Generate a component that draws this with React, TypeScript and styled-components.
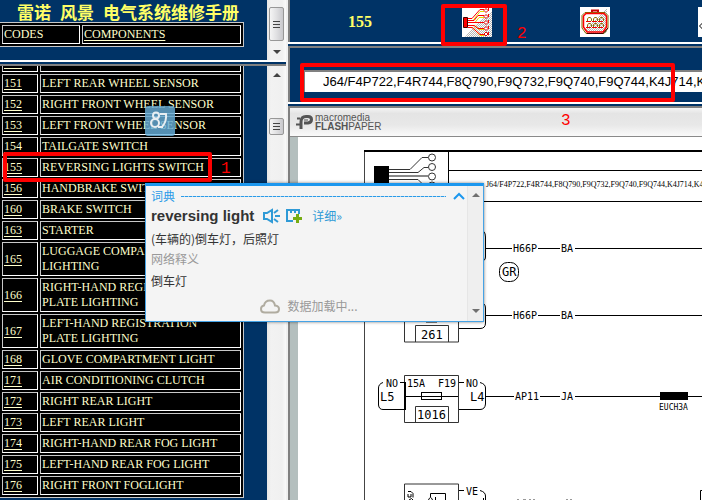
import React from "react";
import styled, { createGlobalStyle } from "styled-components";

const CJK = '"Noto Sans CJK SC", sans-serif';

const GlobalStyle = createGlobalStyle`
  * { box-sizing: border-box; }
  html, body { margin: 0; padding: 0; }
  body { background: #003366; font-family: "Liberation Sans", ${CJK}; }
  h1, h2, p { margin: 0; }
`;

const Page = styled.div`
  position: relative;
  display: grid;
  grid-template-columns: 286px minmax(0, 1fr);
  height: 100vh;
  overflow: hidden;
`;

const Column = styled.div`
  display: flex;
  flex-direction: column;
  min-width: 0;
  min-height: 0;
`;

const RightColumn = styled(Column)`
  border-left: 2px solid #f0f0f0;
`;

const Frame = styled.section<{ $height?: number }>`
  display: flex;
  flex: ${(p) => (p.$height ? `0 0 ${p.$height}px` : "1 1 0")};
  min-height: 0;
  overflow: hidden;
`;

const Divider = styled.div`
  flex: 0 0 6px;
  border-top: 2px solid #fff;
  border-bottom: 2px solid #808080;
  background: #003366;
`;

const FrameBody = styled.div`
  flex: 1;
  min-width: 0;
  overflow: hidden;
`;

const Title = styled.h1`
  display: flex;
  gap: 9px;
  padding: 1px 0 0 17px;
  font: bold 17px/21px ${CJK};
  color: #ffff66;
  white-space: nowrap;
`;

const CodeTable = styled.table<{ $scrolled?: boolean }>`
  width: 245px;
  margin: ${(p) => (p.$scrolled ? "-16px" : "0")} 0 0 -1px;
  border: 1px solid #c8c8c8;
  border-collapse: separate;
  border-spacing: 2px;
  table-layout: fixed;
  background: #000;
  color: #ffffcc;
  font: 12px/15px "Liberation Serif", serif;
`;

const Cell = styled.td<{ $width?: number }>`
  width: ${(p) => (p.$width ? `${p.$width}px` : "auto")};
  padding: 1px;
  border: 1px solid;
  border-color: #c8c8c8 #fff #fff #c8c8c8;
  vertical-align: middle;
  text-align: left;
  font-weight: normal;
`;

const NameCell = styled(Cell)`
  padding-right: 8px;
`;

const CodeLink = styled.a`
  color: inherit;
  text-decoration: underline;
  text-underline-offset: 2px;
`;

const ScrollTrack = styled.div`
  display: flex;
  flex: 0 0 19px;
  flex-direction: column;
  align-items: center;
  background: linear-gradient(90deg, #e6e6e6, #f2f2f2 4px, #f0f0f0 15px, #fafafa);
`;

const ScrollThumb = styled.div<{ $top: number; $height: number }>`
  display: flex;
  flex-direction: column;
  align-items: center;
  justify-content: center;
  gap: 2px;
  width: 15px;
  height: ${(p) => p.$height}px;
  margin-top: ${(p) => p.$top}px;
  border: 1px solid #979797;
  border-radius: 2px;
  background: linear-gradient(90deg, #f5f5f5, #e0e0e2 50%, #c8c8cc);
`;

const Grip = styled.span`
  width: 7px;
  height: 1px;
  background: #444;
`;

const Arrow = styled.div<{ $up?: boolean; $top: number }>`
  width: 0;
  height: 0;
  margin-top: ${(p) => p.$top}px;
  border: 4px solid transparent;
  border-top: ${(p) => (p.$up ? "0" : "4px solid #444")};
  border-bottom: ${(p) => (p.$up ? "4px solid #444" : "0")};
`;

const InsetFrame = styled(Frame)`
  border-left: 2px solid #808080;
`;

const Toolbar = styled.nav`
  display: flex;
  flex: 1;
  align-items: flex-start;
  padding: 7px 0 0 58px;
`;

const CodeNumber = styled.h2`
  width: 114px;
  padding-top: 5px;
  font: bold 16px/20px "Liberation Serif", serif;
  color: #ffff66;
`;

const IconButton = styled.button`
  flex: 0 0 30px;
  height: 30px;
  margin-right: 88px;
  padding: 0;
  border: 0;
  background: #fff;
  svg { display: block; }
`;

const EngineBar = styled.div`
  flex: 1;
  min-width: 0;
  padding: 22px 0 0 14px;
`;

const EngineInput = styled.input`
  display: block;
  width: 100%;
  height: 22px;
  padding: 0 0 2px 18px;
  border: solid #808080;
  border-width: 2px 0 0 1px;
  border-radius: 0;
  background: #fff;
  color: #000;
  font: 13px/18px "Liberation Sans", Arial, sans-serif;
  outline: 0;
`;

const Viewer = styled(InsetFrame)`
  flex-direction: column;
  background: #fff;
`;

const ViewerBar = styled.header`
  display: flex;
  flex: 0 0 29px;
  align-items: center;
  gap: 1px;
  padding-left: 6px;
  border-bottom: 1px solid #8a8a8a;
  background: linear-gradient(#f4f4f4, #e4e4e4 20%, #e8e8e8 60%, #fafafa);
`;

const Brand = styled.div`
  color: #555;
`;

const BrandName = styled.div`
  font: 10px/9px "Liberation Sans", sans-serif;
`;

const Sheet = styled.div`
  flex: 1;
  min-height: 0;
  overflow: hidden;
  border-left: 8px solid #b4bfbe;
  background: #fff;
  svg { display: block; }
`;

const Mark = styled.div<{ $x: number; $y: number; $w: number; $h: number }>`
  position: absolute;
  left: ${(p) => p.$x}px;
  top: ${(p) => p.$y}px;
  width: ${(p) => p.$w}px;
  height: ${(p) => p.$h}px;
  border: 4px solid #ff0000;
  border-radius: 2px;
  pointer-events: none;
`;

const MarkLabel = styled.span<{ $x: number; $y: number }>`
  position: absolute;
  left: ${(p) => p.$x}px;
  top: ${(p) => p.$y}px;
  color: #ff0000;
  font: 16px/16px "Liberation Mono", monospace;
`;

const Watermark = styled.div`
  position: absolute;
  left: 145px;
  top: 106px;
  width: 30px;
  height: 30px;
  border-radius: 3px;
  background: linear-gradient(rgba(100, 165, 205, 0.85), rgba(105, 180, 225, 0.8));
`;

const Popup = styled.aside`
  position: absolute;
  left: 145px;
  top: 183px;
  display: flex;
  width: 339px;
  height: 139px;
  border: 1px solid #45a3e6;
  border-top: 3px solid #1c97ee;
  background: #f4f4f4;
  box-shadow: 0 0 3px rgba(0, 0, 0, 0.5);
  color: #333;
  font: 12px/18px ${CJK};
`;

const PopupBody = styled.div`
  display: flex;
  flex: 1;
  flex-direction: column;
  padding: 0 0 0 5px;
`;

const PopupHead = styled.div`
  display: flex;
  align-items: center;
  gap: 6px;
  height: 20px;
  color: #2a9be8;
`;

const Dashes = styled.span`
  flex: 1;
  height: 1px;
  background: repeating-linear-gradient(90deg, #2a9be8 0 3px, #a8d4f2 3px 4px);
`;

const Fold = styled.button`
  width: 14px;
  height: 14px;
  margin-right: 1px;
  padding: 0;
  border: 0;
  background: none;
  svg { display: block; }
`;

const WordRow = styled.div`
  display: flex;
  align-items: center;
  gap: 6px;
  height: 20px;
`;

const Word = styled.h2`
  margin-right: 3px;
  font: bold 15px/20px "Liberation Sans", Arial, sans-serif;
`;

const PlainButton = styled.button`
  width: 17px;
  height: 16px;
  padding: 0;
  border: 0;
  background: none;
  svg { display: block; }
`;

const MoreLink = styled.a`
  margin-left: 3px;
  color: #2f9ad6;
  text-decoration: none;
`;

const Meaning = styled.p<{ $muted?: boolean }>`
  padding-top: ${(p) => (p.$muted ? 2 : 4)}px;
  color: ${(p) => (p.$muted ? "#999" : "#333")};
`;

const Loading = styled.p`
  display: flex;
  align-items: center;
  justify-content: center;
  gap: 7px;
  margin-top: 7px;
  color: #999;
`;

const PopupTrack = styled.div`
  display: flex;
  flex: 0 0 16px;
  flex-direction: column;
  align-items: center;
  justify-content: space-between;
  padding: 7px 0 8px;
  border-left: 1px solid #e2e2e2;
  background: #eee;
  opacity: 0.75;
`;

const rows: [string, string][] = [
  ["150", "RIGHT REAR WHEEL SENSOR"],
  ["151", "LEFT REAR WHEEL SENSOR"],
  ["152", "RIGHT FRONT WHEEL SENSOR"],
  ["153", "LEFT FRONT WHEEL SENSOR"],
  ["154", "TAILGATE SWITCH"],
  ["155", "REVERSING LIGHTS SWITCH"],
  ["156", "HANDBRAKE SWITCH"],
  ["160", "BRAKE SWITCH"],
  ["163", "STARTER"],
  ["165", "LUGGAGE COMPARTMENT LIGHTING"],
  ["166", "RIGHT-HAND REGISTRATION PLATE LIGHTING"],
  ["167", "LEFT-HAND REGISTRATION PLATE LIGHTING"],
  ["168", "GLOVE COMPARTMENT LIGHT"],
  ["171", "AIR CONDITIONING CLUTCH"],
  ["172", "RIGHT REAR LIGHT"],
  ["173", "LEFT REAR LIGHT"],
  ["174", "RIGHT-HAND REAR FOG LIGHT"],
  ["175", "LEFT-HAND REAR FOG LIGHT"],
  ["176", "RIGHT FRONT FOGLIGHT"],
];

const Thumb = ({ top, height }: { top: number; height: number }) => (
  <ScrollThumb $top={top} $height={height}>
    <Grip />
    <Grip />
    <Grip />
  </ScrollThumb>
);

const Hatch = ({ id }: { id: string }) => (
  <defs>
    <pattern id={id} width="2" height="2" patternUnits="userSpaceOnUse">
      <path d="M0 0h1v1H0zM1 1h1v1H1z" fill="#b4b4b4" />
    </pattern>
  </defs>
);

const HarnessIcon = () => (
  <svg width="30" height="30" viewBox="0 0 30 30" fill="none">
    <Hatch id="hatch-a" />
    <path d="M3 30L11 20L30 4V30z" fill="url(#hatch-a)" />
    <g stroke="#e8d800">
      <path d="M6 13.500H11L18 4.500H22M6 15.500H13L17 10.500H22M6 18.500H13L17 22.500H22M6 20.500H11L18 28.500H22" />
    </g>
    <g stroke="#f00">
      <path d="M6 11.500H10L18 2.500H22M6 13.500H12L16 8.500H22M6 15.500H22M6 18.500H12L16 21.500H22M6 20.500H10L18 27.500H22" />
    </g>
    <path d="M1.500 10.500h4v10h-4z" fill="#f00" stroke="#400" />
    <g fill="#fff" stroke="#d00">
      <path d="M22 3.500l2-2 2 2-2 2zM22 9.500l2-2 2 2-2 2zM22 15.500l2-2 2 2-2 2zM22 21.500l2-2 2 2-2 2zM22 27l2-2 2 2-2 2z" />
    </g>
    <path d="M26.500 1v28" stroke="#f00" strokeDasharray="3 3" />
  </svg>
);

const ConnectorIcon = () => (
  <svg width="30" height="30" viewBox="0 0 30 30" fill="none">
    <Hatch id="hatch-b" />
    <path d="M4 26V23L27 1V26z" fill="url(#hatch-b)" />
    <path d="M12 7V3.500H18V7" stroke="#d00000" strokeWidth="2" />
    <path d="M5 5.500H25L28 8.500V21L24 26.500H6L2 21V8.500z" stroke="#807000" />
    <path d="M6 6.500H24L26.500 9V20L23 25H7L3.500 20V9z" stroke="#f00" strokeWidth="1.500" />
    <path d="M7 26.500H23L28 21" stroke="#400" />
    {[11, 17].map((y) => (
      <g key={y} stroke="#907000">
        <path d={`M7.500 ${y + 3}v-2l1-1.500h2l1 1.500v2M13.500 ${y + 3}v-2l1-1.500h2l1 1.500v2M19.500 ${y + 3}v-2l1-1.500h2l1 1.500v2`} />
        <path d={`M6 ${y + 3.5}h5M12 ${y + 3.5}h5M18 ${y + 3.5}h5`} stroke="#e00" />
      </g>
    ))}
  </svg>
);

const PlugIcon = () => (
  <svg width="30" height="30" viewBox="0 0 30 30" fill="none" stroke="#000">
    <path d="M5 15.500L1.500 19L5 22.500H20" />
  </svg>
);

const Wiring = () => (
  <svg width="100%" height="363" fill="none" stroke="#000" aria-label="Wiring diagram">
    <g transform="translate(-298 -137)">
      <path d="M364.500 500V151" stroke="#444" />
      <path d="M364 151H2000" strokeWidth="2" />
      <path d="M448.500 151V240M448 170.500H2000M448 201.500H2000" />
      <path d="M374 166h15v24h-15z" fill="#000" stroke="none" />
      <path d="M389 169.500H410L422 157.500H428M389 172.500H418L424 167.500H428M389 179.500H418L424 185.500H428" stroke="#333" />
      <path d="M389 176H428" stroke="#888" strokeWidth="2" />
      <g stroke="#333" fill="#fff">
        <circle cx="432" cy="157.500" r="3.500" />
        <circle cx="432" cy="167" r="3.500" />
        <circle cx="432" cy="176.500" r="3.500" />
        <circle cx="432" cy="185.500" r="3.500" />
      </g>
      <path d="M458 229.500H479Q485.500 230 485.500 237V257Q485.500 261.500 479 262H458M458 302.500H480Q485.500 303 485.500 308V323Q485.500 328.500 480 328.500H458" />
      <path d="M486 248.500H512M538 248.500H560M575 248.500H2000M486 315.500H512M538 315.500H560M575 315.500H2000" />
      <rect x="499.500" y="262.500" width="19" height="19" rx="8" />
      <g stroke="#333">
        <path d="M404.500 300.500h54v41.500h-54zM415.500 342v-16.500h33V342" />
        <path d="M404.500 375.500h54v47h-54zM415.500 422.500v-16h33v16" />
        <path d="M404.500 500v-16h54v16" />
      </g>
      <path d="M426 321.500H437" strokeWidth="2" />
      <path d="M405 382V410" strokeWidth="2" />
      <path d="M405 396.500H458" />
      <rect x="421.500" y="392.500" width="20" height="7" fill="#fff" />
      <path d="M421 396.500H442" />
      <path d="M400 382.500H404M383 382.500Q378.500 384 378.500 388V405Q379 409.500 383 409.500H404" />
      <path d="M459 382.500H464M480 382.500Q485.500 384 485.500 388V404Q485 409.500 480 409.500H459" />
      <path d="M486 396.500H514M540 396.500H560M575 396.500H660M688 396.500H2000" />
      <path d="M660 392h28v8h-28z" fill="#000" stroke="none" />
      <path d="M459 490.500H464M480 490.500Q485.500 492 485.500 496V500M483.500 498V500" />
      <path d="M408 491.500h3l2 2v4M408 494v3h3v-3M409 500q3-3 4 0M430.500 497V493.500H445.500V500M428.500 500q2-5 4 0M435.500 497v3" />
      <path d="M702 490.500H700.500V500" />
      <g fill="#000" stroke="none" fontFamily='"DejaVu Sans Mono", monospace' fontSize="10">
        <text x="513" y="252">H66P</text>
        <text x="561" y="252">BA</text>
        <text x="513" y="319">H66P</text>
        <text x="561" y="319">BA</text>
        <text x="407" y="387">15A</text>
        <text x="438" y="387">F19</text>
        <text x="386" y="387">NO</text>
        <text x="466" y="387">NO</text>
        <text x="466" y="495">VE</text>
        <text x="515" y="400">AP11</text>
        <text x="561" y="400">JA</text>
        <text x="659" y="410" fontSize="8">EUCH3A</text>
      </g>
      <g fill="#000" stroke="none" fontFamily='"DejaVu Sans Mono", monospace' fontSize="12">
        <text x="380" y="401">L5</text>
        <text x="470" y="401">L4</text>
        <text x="421" y="339">261</text>
        <text x="417" y="419">1016</text>
        <text x="502" y="276">GR</text>
      </g>
      <path d="M517 499.500H519M523 499.500H526M529 499.500H531M533 499.500H535M566 499.500H568M570 499.500H572" stroke="#999" />
      <text x="486" y="187" fill="#000" stroke="none" fontFamily='"Liberation Serif", serif' fontSize="8">
        J64/F4P722,F4R744,F8Q790,F9Q732,F9Q740,F9Q744,K4J714,K4J730
      </text>
    </g>
  </svg>
);

export default function App() {
  return (
    <>
      <GlobalStyle />
      <Page>
        <Column>
          <Frame $height={60}>
            <FrameBody>
              <Title>
                <span>雷诺</span>
                <span>风景</span>
                <span>电气系统维修手册</span>
              </Title>
              <CodeTable>
                <tbody>
                  <tr>
                    <Cell as="th" $width={78}>CODES</Cell>
                    <Cell as="th">
                      <CodeLink href="#components">COMPONENTS</CodeLink>
                    </Cell>
                  </tr>
                </tbody>
              </CodeTable>
            </FrameBody>
            <ScrollTrack>
              <Thumb top={7} height={34} />
              <Arrow $top={9} />
            </ScrollTrack>
          </Frame>
          <Divider />
          <Frame>
            <FrameBody>
              <CodeTable $scrolled>
                <tbody>
                  {rows.map(([code, name]) => (
                    <tr key={code}>
                      <Cell $width={36}>
                        <CodeLink href={`#${code}`}>{code}</CodeLink>
                      </Cell>
                      <NameCell>{name}</NameCell>
                    </tr>
                  ))}
                </tbody>
              </CodeTable>
            </FrameBody>
            <ScrollTrack>
              <Arrow $up $top={7} />
              <Thumb top={41} height={17} />
            </ScrollTrack>
          </Frame>
        </Column>

        <RightColumn>
          <InsetFrame $height={42}>
            <Toolbar>
              <CodeNumber>155</CodeNumber>
              <IconButton aria-label="Wiring diagram">
                <HarnessIcon />
              </IconButton>
              <IconButton aria-label="Connector">
                <ConnectorIcon />
              </IconButton>
              <IconButton aria-label="Plug">
                <PlugIcon />
              </IconButton>
            </Toolbar>
          </InsetFrame>
          <Divider />
          <InsetFrame $height={54}>
            <EngineBar>
              <EngineInput
                aria-label="Engines"
                readOnly
                value="J64/F4P722,F4R744,F8Q790,F9Q732,F9Q740,F9Q744,K4J714,K4J730"
              />
            </EngineBar>
          </InsetFrame>
          <Divider />
          <Viewer>
            <ViewerBar>
              <svg width="18" height="16" viewBox="0 0 18 16" fill="none" stroke="#555">
                <path d="M5 15V8Q5 2.500 10 2.500H12Q15.500 2.500 15.500 5.500T12 9H8" strokeWidth="3" />
                <path d="M8 6H12" strokeWidth="1" />
                <path d="M1 4.500H4M0 10.500H5" strokeWidth="2" />
              </svg>
              <Brand>
                <BrandName>macromedia</BrandName>
                <BrandName>
                  <b>FLASH</b>PAPER
                </BrandName>
              </Brand>
            </ViewerBar>
            <Sheet>
              <Wiring />
            </Sheet>
          </Viewer>
        </RightColumn>

        <Watermark>
          <svg width="30" height="30" viewBox="0 0 30 30" fill="none" stroke="#e8eef2" strokeWidth="2">
            <circle cx="11" cy="9.500" r="3" />
            <circle cx="10" cy="17" r="4" />
            <path d="M15 8H21Q22 15 17 21M13 21H18" />
          </svg>
        </Watermark>
        <Mark $x={3} $y={152} $w={209} $h={30} />
        <MarkLabel $x={221} $y={161}>1</MarkLabel>
        <Mark $x={441} $y={4} $w={66} $h={42} />
        <MarkLabel $x={517} $y={26}>2</MarkLabel>
        <Mark $x={300} $y={63} $w={375} $h={39} />
        <MarkLabel $x={561} $y={113}>3</MarkLabel>

        <Popup>
          <PopupBody>
            <PopupHead>
              <span>词典</span>
              <Dashes />
              <Fold aria-label="Collapse">
                <svg width="14" height="14" viewBox="0 0 14 14" fill="none" stroke="#1c97ee" strokeWidth="2">
                  <path d="M2 10L7 5L12 10" />
                </svg>
              </Fold>
            </PopupHead>
            <WordRow>
              <Word>reversing light</Word>
              <PlainButton aria-label="Listen">
                <svg width="17" height="16" viewBox="0 0 17 16" fill="none" stroke="#2f9ad6" strokeWidth="2">
                  <path d="M1 5H4L9 2V14L4 11H1zM11 5L15 2M12 8H17M11 11L15 14" />
                </svg>
              </PlainButton>
              <PlainButton aria-label="Add to word list">
                <svg width="17" height="16" viewBox="0 0 17 16" fill="none" stroke="#2f9ad6" strokeWidth="2">
                  <path d="M7 13H1V2H13V6M5 2V5M9 2V5" />
                  <path d="M11.500 6V15M7 10.500H16" stroke="#76ac12" strokeWidth="3" />
                </svg>
              </PlainButton>
              <MoreLink href="#details">详细»</MoreLink>
            </WordRow>
            <Meaning>(车辆的)倒车灯，后照灯</Meaning>
            <Meaning $muted>网络释义</Meaning>
            <Meaning>倒车灯</Meaning>
            <Loading>
              <svg width="20" height="15" viewBox="0 0 20 15" fill="none" stroke="#b0aca0" strokeWidth="2">
                <path d="M5 13.500Q1 13.500 1 10Q1 7 4 6.500Q5 1.500 10 1.500Q14 1.500 15 6.500Q19 7 19 10Q19 13.500 15 13.500z" />
              </svg>
              数据加载中...
            </Loading>
          </PopupBody>
          <PopupTrack>
            <Arrow $up $top={0} />
            <Arrow $top={0} />
          </PopupTrack>
        </Popup>
      </Page>
    </>
  );
}
